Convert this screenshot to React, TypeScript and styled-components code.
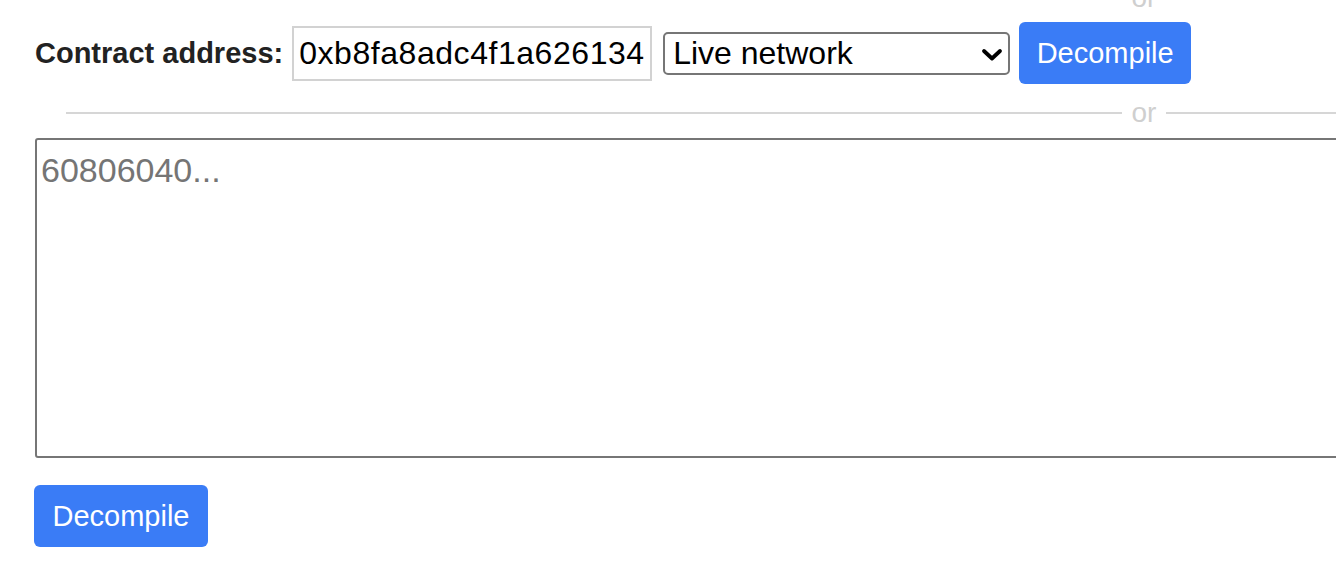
import React, { useState } from "react";
import styled, { createGlobalStyle } from "styled-components";

const GlobalStyle = createGlobalStyle`
  html, body {
    margin: 0;
    padding: 0;
    background: #fff;
    overflow: hidden;
  }
  body {
    font-family: "Liberation Sans", Arial, sans-serif;
    color: #222;
  }
`;

const Page = styled.div`
  width: 2218px;
  margin-top: -17px;
  padding-left: 35px;
  display: flex;
  flex-direction: column;
`;

const Divider = styled.div<{ $gapTop: number }>`
  display: flex;
  align-items: center;
  gap: 10px;
  height: 30px;
  margin: ${({ $gapTop }) => `${$gapTop}px`} 31px 0;
  color: #cfcfcf;
  font-size: 28px;
  line-height: 30px;

  &::before,
  &::after {
    content: "";
    flex: 1;
    height: 2px;
    background: #d6d6d6;
  }
`;

const AddressRow = styled.form`
  display: flex;
  align-items: center;
  height: 62px;
  margin-top: 9px;
`;

const Label = styled.label`
  font-size: 29px;
  font-weight: 700;
  color: #222;
  margin-right: 9px;
  padding-top: 1px;
`;

const AddressInput = styled.input`
  box-sizing: border-box;
  width: 360px;
  height: 55px;
  padding: 0 5px;
  border: 2px solid #d2d2d2;
  border-radius: 0;
  font-family: "Liberation Sans", Arial, sans-serif;
  font-size: 32px;
  letter-spacing: 0.55px;
  color: #000;
  outline: none;
  margin-right: 11px;
`;

const SelectWrap = styled.div`
  position: relative;
  margin-right: 9px;
`;

const NetworkSelect = styled.select`
  appearance: none;
  box-sizing: border-box;
  width: 347px;
  height: 43px;
  padding: 0 40px 0 8px;
  border: 2px solid #767676;
  border-radius: 5px;
  background: #fff;
  font-family: "Liberation Sans", Arial, sans-serif;
  font-size: 32px;
  color: #000;
  display: block;
`;

const Chevron = styled.svg`
  position: absolute;
  right: 6px;
  top: 16px;
  pointer-events: none;
`;

const Button = styled.button<{ $width: number }>`
  box-sizing: border-box;
  width: ${({ $width }) => `${$width}px`};
  height: 62px;
  border: none;
  border-radius: 6px;
  background: #3a7cf6;
  color: #fff;
  font-family: "Liberation Sans", Arial, sans-serif;
  font-size: 29px;
  cursor: pointer;
`;

const BytecodeArea = styled.textarea`
  box-sizing: border-box;
  display: block;
  width: 100%;
  height: 320px;
  margin-top: 10px;
  padding: 10px 4px 4px;
  border: 2px solid #767676;
  border-radius: 3px;
  resize: none;
  font-family: "Liberation Sans", Arial, sans-serif;
  font-size: 34px;
  line-height: 40px;
  color: #000;
  outline: none;

  &::placeholder {
    color: #757575;
  }
`;

const BottomBar = styled.div`
  margin-top: 27px;
  margin-left: -1px;
`;

function App() {
  const [address, setAddress] = useState("0xb8fa8adc4f1a626134");
  const [network, setNetwork] = useState("live");
  const [bytecode, setBytecode] = useState("");

  return (
    <>
      <GlobalStyle />
      <Page>
        <Divider $gapTop={0}>or</Divider>
        <AddressRow onSubmit={(e) => e.preventDefault()}>
          <Label htmlFor='address'>Contract address:</Label>
          <AddressInput
            id='address'
            value={address}
            onChange={(e) => setAddress(e.target.value)}
          />
          <SelectWrap>
            <NetworkSelect
              value={network}
              onChange={(e) => setNetwork(e.target.value)}
            >
              <option value='live'>Live network</option>
              <option value='testnet'>Testnet</option>
            </NetworkSelect>
            <Chevron width='24' height='14' viewBox='0 0 24 14'>
              <path
                d='M4 3 L12 10.5 L20 3'
                fill='none'
                stroke='#000'
                strokeWidth='3.8'
                strokeLinecap='round'
                strokeLinejoin='round'
              />
            </Chevron>
          </SelectWrap>
          <Button type='submit' $width={172}>
            Decompile
          </Button>
        </AddressRow>
        <Divider $gapTop={14}>or</Divider>
        <BytecodeArea
          placeholder='60806040...'
          value={bytecode}
          onChange={(e) => setBytecode(e.target.value)}
        />
        <BottomBar>
          <Button type='button' $width={174}>
            Decompile
          </Button>
        </BottomBar>
      </Page>
    </>
  );
}

export default App;
